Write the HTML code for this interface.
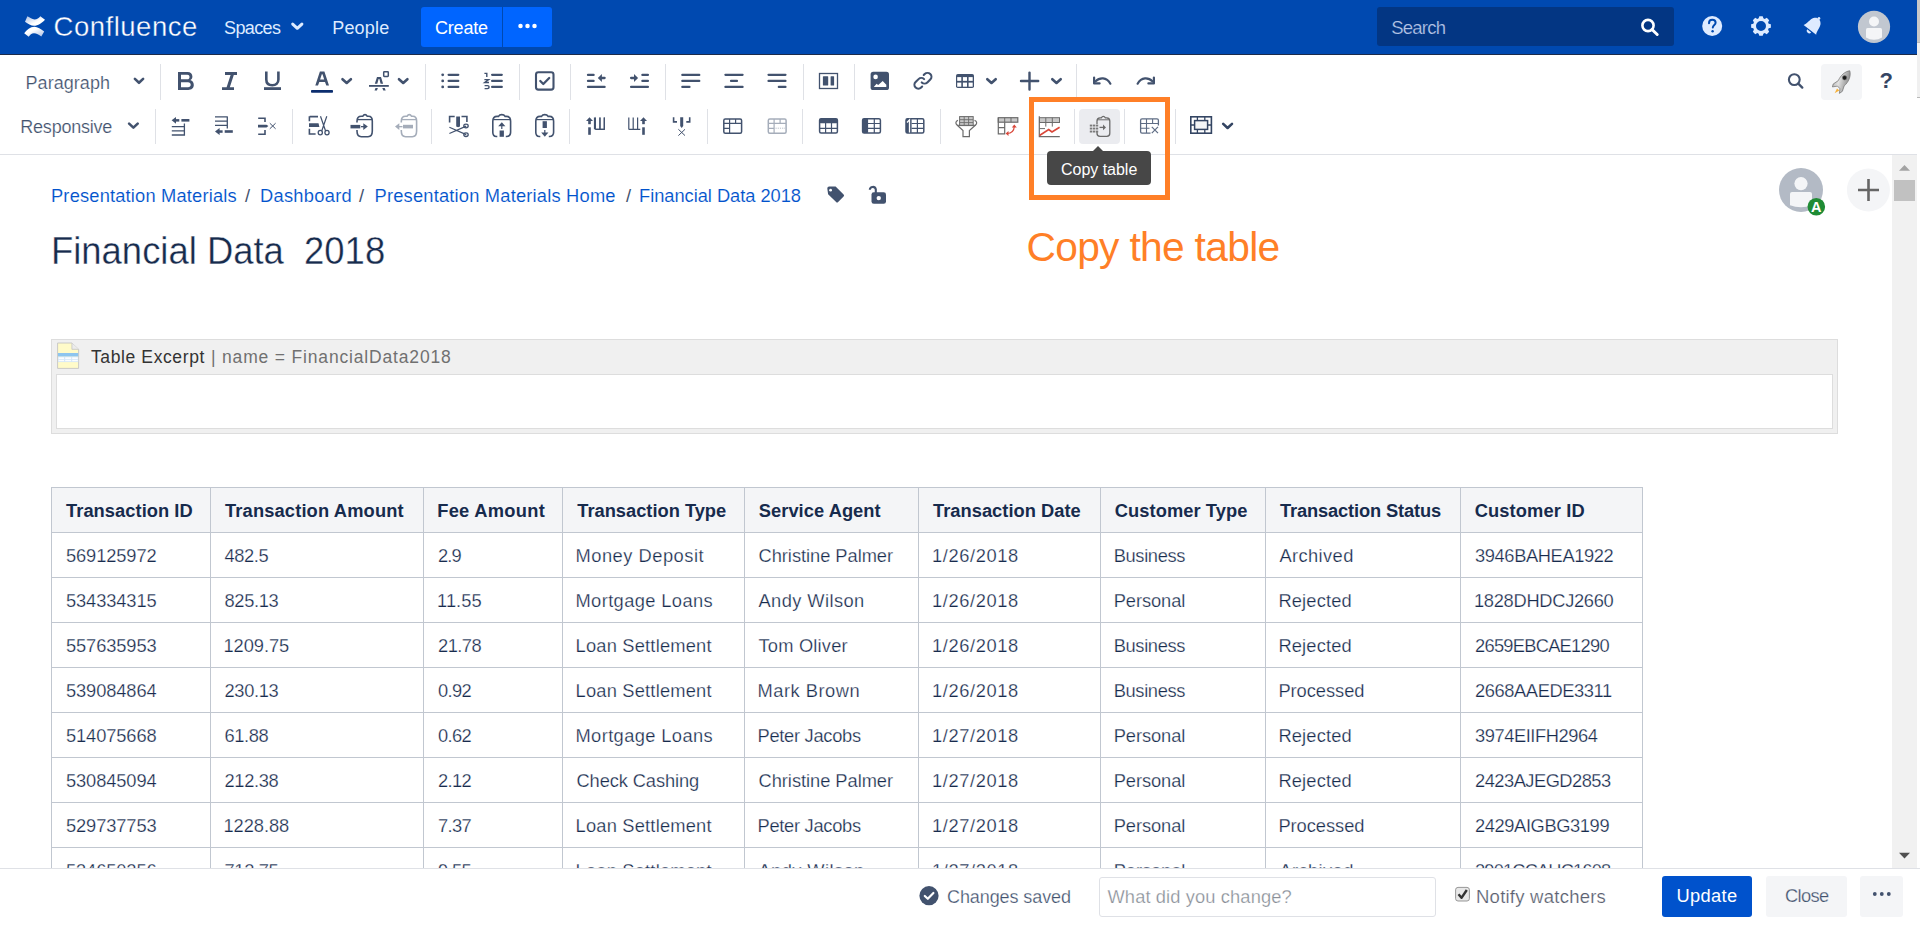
<!DOCTYPE html>
<html><head><meta charset="utf-8"><title>Confluence - Financial Data 2018</title>
<style>
html,body{margin:0;padding:0;width:1920px;height:930px;overflow:hidden;background:#fff;}
body{position:relative;font-family:"Liberation Sans", sans-serif;}
.a{position:absolute;box-sizing:border-box;}
.t{position:absolute;line-height:0;white-space:nowrap;font-family:"Liberation Sans", sans-serif;}
svg.ov{position:absolute;left:0;top:0;}
</style></head><body>
<!-- header -->
<div class="a" style="left:0;top:0;width:1917px;height:54px;background:#0049b0"></div>
<div class="a" style="left:0;top:54px;width:1917px;height:1px;background:#1c2b4a"></div>
<div class="a" style="left:1917px;top:0;width:3px;height:42px;background:#c8c8c8"></div>
<div class="a" style="left:1917px;top:42px;width:3px;height:56px;background:#f0f0f0;border-top:1px solid #b8b8b8;border-bottom:1px solid #b8b8b8"></div>
<div class="a" style="left:421px;top:7px;width:131px;height:40px;background:#0065ff;border-radius:3px"></div>
<div class="a" style="left:502px;top:7px;width:1px;height:40px;background:#0049b0"></div>
<div class="a" style="left:1377px;top:7px;width:297px;height:39px;background:#033683;border-radius:3px"></div>
<!-- toolbar -->
<div class="a" style="left:0;top:154px;width:1917px;height:1px;background:#dfe1e6"></div>
<div class="a" style="left:1821px;top:64px;width:41px;height:36px;background:#f4f5f7;border-radius:4px"></div>
<div class="a" style="left:1079px;top:109px;width:41px;height:35px;background:#ebecf0;border-radius:4px"></div>
<!-- scrollbar -->
<div class="a" style="left:1892px;top:155px;width:25px;height:713px;background:#f1f1f1"></div>
<div class="a" style="left:1894px;top:180px;width:21px;height:21px;background:#c1c1c1"></div>
<!-- macro -->
<div class="a" style="left:51px;top:339px;width:1787px;height:95px;background:#f0f0f0;border:1px solid #dddddd"></div>
<div class="a" style="left:56px;top:374px;width:1777px;height:55px;background:#fff;border:1px solid #dddddd"></div>
<!-- table -->
<div class="a" style="left:51px;top:487px;width:1592px;height:46px;background:#f4f5f7"></div>
<div class="a" style="left:51px;top:487px;width:1px;height:400px;background:#c1c7d0"></div>
<div class="a" style="left:210px;top:487px;width:1px;height:400px;background:#c1c7d0"></div>
<div class="a" style="left:423px;top:487px;width:1px;height:400px;background:#c1c7d0"></div>
<div class="a" style="left:562px;top:487px;width:1px;height:400px;background:#c1c7d0"></div>
<div class="a" style="left:744px;top:487px;width:1px;height:400px;background:#c1c7d0"></div>
<div class="a" style="left:918px;top:487px;width:1px;height:400px;background:#c1c7d0"></div>
<div class="a" style="left:1100px;top:487px;width:1px;height:400px;background:#c1c7d0"></div>
<div class="a" style="left:1265px;top:487px;width:1px;height:400px;background:#c1c7d0"></div>
<div class="a" style="left:1460px;top:487px;width:1px;height:400px;background:#c1c7d0"></div>
<div class="a" style="left:1642px;top:487px;width:1px;height:400px;background:#c1c7d0"></div>
<div class="a" style="left:51px;top:487px;width:1592px;height:1px;background:#c1c7d0"></div>
<div class="a" style="left:51px;top:532px;width:1592px;height:1px;background:#c1c7d0"></div>
<div class="a" style="left:51px;top:577px;width:1592px;height:1px;background:#c1c7d0"></div>
<div class="a" style="left:51px;top:622px;width:1592px;height:1px;background:#c1c7d0"></div>
<div class="a" style="left:51px;top:667px;width:1592px;height:1px;background:#c1c7d0"></div>
<div class="a" style="left:51px;top:712px;width:1592px;height:1px;background:#c1c7d0"></div>
<div class="a" style="left:51px;top:757px;width:1592px;height:1px;background:#c1c7d0"></div>
<div class="a" style="left:51px;top:802px;width:1592px;height:1px;background:#c1c7d0"></div>
<div class="a" style="left:51px;top:847px;width:1592px;height:1px;background:#c1c7d0"></div>
<div class="a" style="left:1047px;top:151px;width:104px;height:34px;background:#474747;border-radius:4px"></div>
<div class="a" style="left:1092px;top:146px;width:0;height:0;border-left:6px solid transparent;border-right:6px solid transparent;border-bottom:6px solid #474747"></div>
<div class="t" style="left:53.50px;top:26.77px;font-size:27.5px;color:#fff;letter-spacing:0.519px;-webkit-text-stroke:0.35px #0049b0;">Confluence</div>
<div class="t" style="left:224.00px;top:27.76px;font-size:18px;color:#deebff;letter-spacing:-0.608px;">Spaces</div>
<div class="t" style="left:332.20px;top:27.76px;font-size:18px;color:#deebff;letter-spacing:0.193px;">People</div>
<div class="t" style="left:435.00px;top:27.76px;font-size:18px;color:#fff;letter-spacing:-0.203px;">Create</div>
<div class="t" style="left:1391.20px;top:27.59px;font-size:18.5px;color:#b3c4e6;letter-spacing:-0.766px;-webkit-text-stroke:0.2px #033683;">Search</div>
<div class="t" style="left:25.50px;top:82.56px;font-size:18px;color:#42526e;letter-spacing:0.057px;-webkit-text-stroke:0.2px #fff;">Paragraph</div>
<div class="t" style="left:20.30px;top:126.76px;font-size:18px;color:#42526e;letter-spacing:-0.227px;-webkit-text-stroke:0.2px #fff;">Responsive</div>
<div class="t" style="left:1879.50px;top:81.37px;font-size:22px;color:#344563;font-weight:700;">?</div>
<div class="t" style="left:51.00px;top:196.16px;font-size:18.3px;color:#0052cc;letter-spacing:0.179px;-webkit-text-stroke:0.12px #fff;">Presentation Materials</div>
<div class="t" style="left:245.00px;top:196.16px;font-size:18.3px;color:#42526e;">/</div>
<div class="t" style="left:260.00px;top:196.16px;font-size:18.3px;color:#0052cc;letter-spacing:0.279px;-webkit-text-stroke:0.12px #fff;">Dashboard</div>
<div class="t" style="left:359.00px;top:196.16px;font-size:18.3px;color:#42526e;">/</div>
<div class="t" style="left:374.50px;top:196.16px;font-size:18.3px;color:#0052cc;letter-spacing:0.202px;-webkit-text-stroke:0.12px #fff;">Presentation Materials Home</div>
<div class="t" style="left:626.00px;top:196.16px;font-size:18.3px;color:#42526e;">/</div>
<div class="t" style="left:639.00px;top:196.16px;font-size:18.3px;color:#0052cc;letter-spacing:-0.035px;-webkit-text-stroke:0.12px #fff;">Financial Data 2018</div>
<div class="t" style="left:51.21px;top:251.41px;font-size:39.2px;color:#172b4d;transform:scaleX(0.9296);transform-origin:0 0;-webkit-text-stroke:0.35px #fff;">Financial Data  2018</div>
<div class="t" style="left:1026.50px;top:246.69px;font-size:40.7px;color:#ff7f27;letter-spacing:-0.673px;">Copy the table</div>
<div class="t" style="left:1061.00px;top:169.65px;font-size:16px;color:#fff;letter-spacing:-0.022px;">Copy table</div>
<div class="t" style="left:91.00px;top:357.13px;font-size:17.5px;color:#333333;letter-spacing:0.611px;">Table Excerpt</div>
<div class="t" style="left:211.00px;top:357.13px;font-size:17.5px;color:#707070;letter-spacing:0.827px;">| name = FinancialData2018</div>
<div class="t" style="left:66.00px;top:511.16px;font-size:18.3px;color:#172b4d;font-weight:700;letter-spacing:0.056px;">Transaction ID</div>
<div class="t" style="left:225.00px;top:511.16px;font-size:18.3px;color:#172b4d;font-weight:700;letter-spacing:0.150px;">Transaction Amount</div>
<div class="t" style="left:437.20px;top:511.16px;font-size:18.3px;color:#172b4d;font-weight:700;letter-spacing:0.296px;">Fee Amount</div>
<div class="t" style="left:577.25px;top:511.16px;font-size:18.3px;color:#172b4d;font-weight:700;letter-spacing:-0.005px;">Transaction Type</div>
<div class="t" style="left:758.75px;top:511.16px;font-size:18.3px;color:#172b4d;font-weight:700;letter-spacing:0.055px;">Service Agent</div>
<div class="t" style="left:933.00px;top:511.16px;font-size:18.3px;color:#172b4d;font-weight:700;letter-spacing:0.030px;">Transaction Date</div>
<div class="t" style="left:1114.80px;top:511.16px;font-size:18.3px;color:#172b4d;font-weight:700;letter-spacing:0.071px;">Customer Type</div>
<div class="t" style="left:1280.00px;top:511.16px;font-size:18.3px;color:#172b4d;font-weight:700;letter-spacing:-0.141px;">Transaction Status</div>
<div class="t" style="left:1474.70px;top:511.16px;font-size:18.3px;color:#172b4d;font-weight:700;letter-spacing:0.121px;">Customer ID</div>
<div class="t" style="left:66.00px;top:555.96px;font-size:18.3px;color:#172b4d;letter-spacing:-0.105px;-webkit-text-stroke:0.25px #fff;">569125972</div>
<div class="t" style="left:224.50px;top:555.96px;font-size:18.3px;color:#172b4d;letter-spacing:-0.395px;-webkit-text-stroke:0.25px #fff;">482.5</div>
<div class="t" style="left:438.00px;top:555.96px;font-size:18.3px;color:#172b4d;letter-spacing:-0.873px;-webkit-text-stroke:0.25px #fff;">2.9</div>
<div class="t" style="left:575.50px;top:555.96px;font-size:18.3px;color:#172b4d;letter-spacing:0.512px;-webkit-text-stroke:0.25px #fff;">Money Deposit</div>
<div class="t" style="left:758.50px;top:555.96px;font-size:18.3px;color:#172b4d;letter-spacing:-0.035px;-webkit-text-stroke:0.25px #fff;">Christine Palmer</div>
<div class="t" style="left:932.00px;top:555.96px;font-size:18.3px;color:#172b4d;letter-spacing:0.605px;-webkit-text-stroke:0.25px #fff;">1/26/2018</div>
<div class="t" style="left:1113.70px;top:555.96px;font-size:18.3px;color:#172b4d;letter-spacing:-0.348px;-webkit-text-stroke:0.25px #fff;">Business</div>
<div class="t" style="left:1279.40px;top:555.96px;font-size:18.3px;color:#172b4d;letter-spacing:0.406px;-webkit-text-stroke:0.25px #fff;">Archived</div>
<div class="t" style="left:1475.00px;top:555.96px;font-size:18.3px;color:#172b4d;letter-spacing:-0.379px;-webkit-text-stroke:0.25px #fff;">3946BAHEA1922</div>
<div class="t" style="left:66.00px;top:600.96px;font-size:18.3px;color:#172b4d;letter-spacing:-0.105px;-webkit-text-stroke:0.25px #fff;">534334315</div>
<div class="t" style="left:224.50px;top:600.96px;font-size:18.3px;color:#172b4d;letter-spacing:-0.350px;-webkit-text-stroke:0.25px #fff;">825.13</div>
<div class="t" style="left:437.00px;top:600.96px;font-size:18.3px;color:#172b4d;letter-spacing:0.069px;-webkit-text-stroke:0.25px #fff;">11.55</div>
<div class="t" style="left:575.50px;top:600.96px;font-size:18.3px;color:#172b4d;letter-spacing:0.386px;-webkit-text-stroke:0.25px #fff;">Mortgage Loans</div>
<div class="t" style="left:758.50px;top:600.96px;font-size:18.3px;color:#172b4d;letter-spacing:0.407px;-webkit-text-stroke:0.25px #fff;">Andy Wilson</div>
<div class="t" style="left:932.00px;top:600.96px;font-size:18.3px;color:#172b4d;letter-spacing:0.605px;-webkit-text-stroke:0.25px #fff;">1/26/2018</div>
<div class="t" style="left:1113.70px;top:600.96px;font-size:18.3px;color:#172b4d;letter-spacing:-0.070px;-webkit-text-stroke:0.25px #fff;">Personal</div>
<div class="t" style="left:1278.40px;top:600.96px;font-size:18.3px;color:#172b4d;letter-spacing:0.174px;-webkit-text-stroke:0.25px #fff;">Rejected</div>
<div class="t" style="left:1474.00px;top:600.96px;font-size:18.3px;color:#172b4d;letter-spacing:-0.293px;-webkit-text-stroke:0.25px #fff;">1828DHDCJ2660</div>
<div class="t" style="left:66.00px;top:645.96px;font-size:18.3px;color:#172b4d;letter-spacing:-0.105px;-webkit-text-stroke:0.25px #fff;">557635953</div>
<div class="t" style="left:223.50px;top:645.96px;font-size:18.3px;color:#172b4d;letter-spacing:-0.069px;-webkit-text-stroke:0.25px #fff;">1209.75</div>
<div class="t" style="left:438.00px;top:645.96px;font-size:18.3px;color:#172b4d;letter-spacing:-0.520px;-webkit-text-stroke:0.25px #fff;">21.78</div>
<div class="t" style="left:575.50px;top:645.96px;font-size:18.3px;color:#172b4d;letter-spacing:0.210px;-webkit-text-stroke:0.25px #fff;">Loan Settlement</div>
<div class="t" style="left:758.50px;top:645.96px;font-size:18.3px;color:#172b4d;letter-spacing:0.193px;-webkit-text-stroke:0.25px #fff;">Tom Oliver</div>
<div class="t" style="left:932.00px;top:645.96px;font-size:18.3px;color:#172b4d;letter-spacing:0.605px;-webkit-text-stroke:0.25px #fff;">1/26/2018</div>
<div class="t" style="left:1113.70px;top:645.96px;font-size:18.3px;color:#172b4d;letter-spacing:-0.348px;-webkit-text-stroke:0.25px #fff;">Business</div>
<div class="t" style="left:1278.40px;top:645.96px;font-size:18.3px;color:#172b4d;letter-spacing:0.174px;-webkit-text-stroke:0.25px #fff;">Rejected</div>
<div class="t" style="left:1475.00px;top:645.96px;font-size:18.3px;color:#172b4d;letter-spacing:-0.729px;-webkit-text-stroke:0.25px #fff;">2659EBCAE1290</div>
<div class="t" style="left:66.00px;top:690.96px;font-size:18.3px;color:#172b4d;letter-spacing:-0.105px;-webkit-text-stroke:0.25px #fff;">539084864</div>
<div class="t" style="left:224.50px;top:690.96px;font-size:18.3px;color:#172b4d;letter-spacing:-0.350px;-webkit-text-stroke:0.25px #fff;">230.13</div>
<div class="t" style="left:438.00px;top:690.96px;font-size:18.3px;color:#172b4d;letter-spacing:-0.638px;-webkit-text-stroke:0.25px #fff;">0.92</div>
<div class="t" style="left:575.50px;top:690.96px;font-size:18.3px;color:#172b4d;letter-spacing:0.210px;-webkit-text-stroke:0.25px #fff;">Loan Settlement</div>
<div class="t" style="left:757.50px;top:690.96px;font-size:18.3px;color:#172b4d;letter-spacing:0.516px;-webkit-text-stroke:0.25px #fff;">Mark Brown</div>
<div class="t" style="left:932.00px;top:690.96px;font-size:18.3px;color:#172b4d;letter-spacing:0.605px;-webkit-text-stroke:0.25px #fff;">1/26/2018</div>
<div class="t" style="left:1113.70px;top:690.96px;font-size:18.3px;color:#172b4d;letter-spacing:-0.348px;-webkit-text-stroke:0.25px #fff;">Business</div>
<div class="t" style="left:1278.40px;top:690.96px;font-size:18.3px;color:#172b4d;letter-spacing:-0.038px;-webkit-text-stroke:0.25px #fff;">Processed</div>
<div class="t" style="left:1475.00px;top:690.96px;font-size:18.3px;color:#172b4d;letter-spacing:-0.399px;-webkit-text-stroke:0.25px #fff;">2668AAEDE3311</div>
<div class="t" style="left:66.00px;top:735.96px;font-size:18.3px;color:#172b4d;letter-spacing:-0.105px;-webkit-text-stroke:0.25px #fff;">514075668</div>
<div class="t" style="left:224.50px;top:735.96px;font-size:18.3px;color:#172b4d;letter-spacing:-0.395px;-webkit-text-stroke:0.25px #fff;">61.88</div>
<div class="t" style="left:438.00px;top:735.96px;font-size:18.3px;color:#172b4d;letter-spacing:-0.638px;-webkit-text-stroke:0.25px #fff;">0.62</div>
<div class="t" style="left:575.50px;top:735.96px;font-size:18.3px;color:#172b4d;letter-spacing:0.386px;-webkit-text-stroke:0.25px #fff;">Mortgage Loans</div>
<div class="t" style="left:757.50px;top:735.96px;font-size:18.3px;color:#172b4d;letter-spacing:-0.278px;-webkit-text-stroke:0.25px #fff;">Peter Jacobs</div>
<div class="t" style="left:932.00px;top:735.96px;font-size:18.3px;color:#172b4d;letter-spacing:0.605px;-webkit-text-stroke:0.25px #fff;">1/27/2018</div>
<div class="t" style="left:1113.70px;top:735.96px;font-size:18.3px;color:#172b4d;letter-spacing:-0.070px;-webkit-text-stroke:0.25px #fff;">Personal</div>
<div class="t" style="left:1278.40px;top:735.96px;font-size:18.3px;color:#172b4d;letter-spacing:0.174px;-webkit-text-stroke:0.25px #fff;">Rejected</div>
<div class="t" style="left:1475.00px;top:735.96px;font-size:18.3px;color:#172b4d;letter-spacing:-0.433px;-webkit-text-stroke:0.25px #fff;">3974EIIFH2964</div>
<div class="t" style="left:66.00px;top:780.96px;font-size:18.3px;color:#172b4d;letter-spacing:-0.105px;-webkit-text-stroke:0.25px #fff;">530845094</div>
<div class="t" style="left:224.50px;top:780.96px;font-size:18.3px;color:#172b4d;letter-spacing:-0.350px;-webkit-text-stroke:0.25px #fff;">212.38</div>
<div class="t" style="left:438.00px;top:780.96px;font-size:18.3px;color:#172b4d;letter-spacing:-0.638px;-webkit-text-stroke:0.25px #fff;">2.12</div>
<div class="t" style="left:576.50px;top:780.96px;font-size:18.3px;color:#172b4d;letter-spacing:-0.109px;-webkit-text-stroke:0.25px #fff;">Check Cashing</div>
<div class="t" style="left:758.50px;top:780.96px;font-size:18.3px;color:#172b4d;letter-spacing:-0.035px;-webkit-text-stroke:0.25px #fff;">Christine Palmer</div>
<div class="t" style="left:932.00px;top:780.96px;font-size:18.3px;color:#172b4d;letter-spacing:0.605px;-webkit-text-stroke:0.25px #fff;">1/27/2018</div>
<div class="t" style="left:1113.70px;top:780.96px;font-size:18.3px;color:#172b4d;letter-spacing:-0.070px;-webkit-text-stroke:0.25px #fff;">Personal</div>
<div class="t" style="left:1278.40px;top:780.96px;font-size:18.3px;color:#172b4d;letter-spacing:0.174px;-webkit-text-stroke:0.25px #fff;">Rejected</div>
<div class="t" style="left:1475.00px;top:780.96px;font-size:18.3px;color:#172b4d;letter-spacing:-0.510px;-webkit-text-stroke:0.25px #fff;">2423AJEGD2853</div>
<div class="t" style="left:66.00px;top:825.96px;font-size:18.3px;color:#172b4d;letter-spacing:-0.105px;-webkit-text-stroke:0.25px #fff;">529737753</div>
<div class="t" style="left:223.50px;top:825.96px;font-size:18.3px;color:#172b4d;letter-spacing:-0.069px;-webkit-text-stroke:0.25px #fff;">1228.88</div>
<div class="t" style="left:438.00px;top:825.96px;font-size:18.3px;color:#172b4d;letter-spacing:-0.638px;-webkit-text-stroke:0.25px #fff;">7.37</div>
<div class="t" style="left:575.50px;top:825.96px;font-size:18.3px;color:#172b4d;letter-spacing:0.210px;-webkit-text-stroke:0.25px #fff;">Loan Settlement</div>
<div class="t" style="left:757.50px;top:825.96px;font-size:18.3px;color:#172b4d;letter-spacing:-0.278px;-webkit-text-stroke:0.25px #fff;">Peter Jacobs</div>
<div class="t" style="left:932.00px;top:825.96px;font-size:18.3px;color:#172b4d;letter-spacing:0.605px;-webkit-text-stroke:0.25px #fff;">1/27/2018</div>
<div class="t" style="left:1113.70px;top:825.96px;font-size:18.3px;color:#172b4d;letter-spacing:-0.070px;-webkit-text-stroke:0.25px #fff;">Personal</div>
<div class="t" style="left:1278.40px;top:825.96px;font-size:18.3px;color:#172b4d;letter-spacing:-0.038px;-webkit-text-stroke:0.25px #fff;">Processed</div>
<div class="t" style="left:1475.00px;top:825.96px;font-size:18.3px;color:#172b4d;letter-spacing:-0.390px;-webkit-text-stroke:0.25px #fff;">2429AIGBG3199</div>
<div class="t" style="left:66.00px;top:870.96px;font-size:18.3px;color:#172b4d;letter-spacing:-0.105px;-webkit-text-stroke:0.25px #fff;">534650256</div>
<div class="t" style="left:224.50px;top:870.96px;font-size:18.3px;color:#172b4d;letter-spacing:-0.350px;-webkit-text-stroke:0.25px #fff;">712.75</div>
<div class="t" style="left:438.00px;top:870.96px;font-size:18.3px;color:#172b4d;letter-spacing:-0.638px;-webkit-text-stroke:0.25px #fff;">9.55</div>
<div class="t" style="left:575.50px;top:870.96px;font-size:18.3px;color:#172b4d;letter-spacing:0.210px;-webkit-text-stroke:0.25px #fff;">Loan Settlement</div>
<div class="t" style="left:758.50px;top:870.96px;font-size:18.3px;color:#172b4d;letter-spacing:0.407px;-webkit-text-stroke:0.25px #fff;">Andy Wilson</div>
<div class="t" style="left:932.00px;top:870.96px;font-size:18.3px;color:#172b4d;letter-spacing:0.605px;-webkit-text-stroke:0.25px #fff;">1/27/2018</div>
<div class="t" style="left:1113.70px;top:870.96px;font-size:18.3px;color:#172b4d;letter-spacing:-0.070px;-webkit-text-stroke:0.25px #fff;">Personal</div>
<div class="t" style="left:1279.40px;top:870.96px;font-size:18.3px;color:#172b4d;letter-spacing:0.406px;-webkit-text-stroke:0.25px #fff;">Archived</div>
<div class="t" style="left:1475.00px;top:870.96px;font-size:18.3px;color:#172b4d;letter-spacing:-0.848px;-webkit-text-stroke:0.25px #fff;">2901CCAHC1608</div>
<!-- footer -->
<div class="a" style="left:0;top:868px;width:1920px;height:62px;background:#fff;border-top:1px solid #dfe1e6"></div>
<div class="a" style="left:1099px;top:877px;width:337px;height:40px;background:#fff;border:1px solid #dfe1e6;border-radius:3px"></div>
<div class="a" style="left:1662px;top:876px;width:90px;height:41px;background:#0052cc;border-radius:3px"></div>
<div class="a" style="left:1766px;top:876px;width:81px;height:41px;background:#f4f5f7;border-radius:3px"></div>
<div class="a" style="left:1860px;top:876px;width:43px;height:41px;background:#f4f5f7;border-radius:3px"></div>
<div class="t" style="left:947.00px;top:896.56px;font-size:18px;color:#42526e;letter-spacing:-0.090px;-webkit-text-stroke:0.25px #fff;">Changes saved</div>
<div class="t" style="left:1107.50px;top:897.16px;font-size:18.3px;color:#8a8f98;letter-spacing:0.118px;-webkit-text-stroke:0.25px #fff;">What did you change?</div>
<div class="t" style="left:1476.00px;top:897.49px;font-size:18.5px;color:#5b6170;letter-spacing:0.242px;-webkit-text-stroke:0.2px #fff;">Notify watchers</div>
<div class="t" style="left:1676.50px;top:896.46px;font-size:18.3px;color:#fff;letter-spacing:0.343px;">Update</div>
<div class="t" style="left:1785.00px;top:896.46px;font-size:18.3px;color:#42526e;letter-spacing:-0.643px;-webkit-text-stroke:0.25px #f4f5f7;">Close</div>
<svg class="ov" width="1920" height="930" viewBox="0 0 1920 930"><defs><linearGradient id="lg1" x1="0" y1="0" x2="1" y2="1"><stop offset="0" stop-color="#a9bde3"/><stop offset="0.6" stop-color="#ffffff"/></linearGradient>
<linearGradient id="lg2" x1="1" y1="1" x2="0" y2="0"><stop offset="0" stop-color="#a9bde3"/><stop offset="0.6" stop-color="#ffffff"/></linearGradient></defs>
<path fill="url(#lg1)" d="M27.4,16.3 L25,21.7 C28,23.5 31,25.7 34,25.7 C38,25.7 42,23 45,19.7 L40.3,16.2 C39,17.8 37,19.5 34.5,19.5 C32,19.5 30,17.5 27.4,16.3 Z"/>
<path fill="url(#lg2)" d="M24.2,33.3 L28.7,36.8 C30,35 31.5,33.3 34,33.3 C36.5,33.3 39,35 41.3,36.5 L44.2,31.4 C41,29.5 37.5,26.8 34.5,26.8 C30,26.8 27,30 24.2,33.3 Z"/>
<path d="M292.7,24.1 L297.3,28.3 L301.9,24.1" fill="none" stroke="#deebff" stroke-width="3" stroke-linecap="round" stroke-linejoin="round"/>
<circle cx="520.5" cy="26" r="2.25" fill="#fff"/>
<circle cx="527.5" cy="26" r="2.25" fill="#fff"/>
<circle cx="534.5" cy="26" r="2.25" fill="#fff"/>
<circle cx="1648" cy="25.5" r="5.6" fill="none" stroke="#fff" stroke-width="2.6"/><path d="M1652,29.5 L1657.2,34.5" stroke="#fff" stroke-width="3" stroke-linecap="round"/>
<circle cx="1712.2" cy="26" r="10" fill="#deebff"/>
<path d="M1709,23.2 C1709,21 1710.5,19.8 1712.3,19.8 C1714.2,19.8 1715.6,21 1715.6,22.8 C1715.6,24.9 1712.8,25.2 1712.8,27.6" fill="none" stroke="#0049b0" stroke-width="2" stroke-linecap="round"/><circle cx="1712.6" cy="31.2" r="1.2" fill="#0049b0"/>
<path fill="#deebff" fill-rule="evenodd" d="M1770.86,24.31 L1770.86,27.69 L1768.64,28.36 L1768.08,29.73 L1769.17,31.77 L1766.77,34.17 L1764.73,33.08 L1763.36,33.64 L1762.69,35.86 L1759.31,35.86 L1758.64,33.64 L1757.27,33.08 L1755.23,34.17 L1752.83,31.77 L1753.92,29.73 L1753.36,28.36 L1751.14,27.69 L1751.14,24.31 L1753.36,23.64 L1753.92,22.27 L1752.83,20.23 L1755.23,17.83 L1757.27,18.92 L1758.64,18.36 L1759.31,16.14 L1762.69,16.14 L1763.36,18.36 L1764.73,18.92 L1766.77,17.83 L1769.17,20.23 L1768.08,22.27 L1768.64,23.64 Z M1766,26 A5,5 0 1 0 1756,26 A5,5 0 1 0 1766,26 Z"/>
<g transform="rotate(38 1813 26)"><path fill="#deebff" d="M1805,31 C1807,29 1806.5,22 1808.5,19.5 C1810,17.5 1811.5,17 1813,17 C1814.5,17 1816,17.5 1817.5,19.5 C1819.5,22 1819,29 1821,31 Z"/><path fill="#deebff" d="M1810.5,32.2 H1815.5 A2.5,2.5 0 0 1 1810.5,32.2 Z"/><circle cx="1813" cy="16.3" r="1.4" fill="#deebff"/></g>
<circle cx="1874" cy="26.8" r="16.1" fill="#c1c7d0"/><circle cx="1874" cy="21.5" r="5" fill="#f4f5f7"/><path fill="#f4f5f7" d="M1866,29.5 Q1866,28 1867.5,28 H1880.5 Q1882,28 1882,29.5 V37.5 Q1878.5,39.8 1874,39.8 Q1869.5,39.8 1866,37.5 Z"/>
<path d="M134.9,78.9 L139,82.8 L143.1,78.9" fill="none" stroke="#42526e" stroke-width="2.6" stroke-linecap="round" stroke-linejoin="round"/>
<rect x="160.0" y="64" width="1" height="36" fill="#dfe1e6"/>
<rect x="425.0" y="64" width="1" height="36" fill="#dfe1e6"/>
<rect x="519.0" y="64" width="1" height="36" fill="#dfe1e6"/>
<rect x="570.0" y="64" width="1" height="36" fill="#dfe1e6"/>
<rect x="665.0" y="64" width="1" height="36" fill="#dfe1e6"/>
<rect x="803.0" y="64" width="1" height="36" fill="#dfe1e6"/>
<rect x="854.0" y="64" width="1" height="36" fill="#dfe1e6"/>
<rect x="1076.0" y="64" width="1" height="36" fill="#dfe1e6"/>
<path fill="#42526e" fill-rule="evenodd" d="M178,72 H187.6 C190.6,72 192.4,73.9 192.4,76.4 C192.4,78.1 191.6,79.4 190.3,80.1 C192.5,80.8 193.8,82.5 193.8,85.1 C193.8,88.2 191.6,90 188.3,90 H178 Z M181,74.8 V79.3 H187.3 C188.7,79.3 189.5,78.5 189.5,77 C189.5,75.6 188.7,74.8 187.3,74.8 Z M181,82.2 V87.2 H188 C189.7,87.2 190.7,86.3 190.7,84.7 C190.7,83.1 189.7,82.2 188,82.2 Z"/>
<path fill="#42526e" d="M225,72 H237 V75 H233.8 L229.8,87.2 H234 V90 H222 V87.2 H226.6 L230.6,75 H225 Z"/>
<path d="M266.3,71.6 V79.6 C266.3,83.3 268.8,85.3 272.3,85.3 C275.8,85.3 278.4,83.3 278.4,79.6 V71.6" fill="none" stroke="#42526e" stroke-width="2.6"/>
<rect x="264" y="87.2" width="17" height="2.8" fill="#42526e"/>
<path fill="#42526e" fill-rule="evenodd" d="M315.3,85.6 L319.9,71.6 H324.4 L329,85.6 H326.3 L325,81.9 H319.3 L318,85.6 Z M320.1,79.5 H324.2 L322.5,74.2 H321.8 Z"/>
<rect x="311" y="90" width="22" height="2.8" rx="0.8" fill="#0b2d6e"/>
<path d="M342.5,79.2 L346.7,83 L350.9,79.2" fill="none" stroke="#42526e" stroke-width="2.6" stroke-linecap="round" stroke-linejoin="round"/>
<path fill="#42526e" d="M374.8,83.8 L377,76.9 H381 L383.1,83.8 H380.6 L379.4,79 H378.6 L377.3,83.8 Z"/>
<rect x="369" y="85" width="19.8" height="1.8" fill="#42526e"/>
<path fill="#42526e" d="M375.5,88 H377.9 L376.9,90.6 H374.5 Z M382.3,88 H384.7 L385.7,90.6 H383.3 Z"/>
<rect x="383.7" y="71.8" width="4.6" height="4.6" fill="none" stroke="#42526e" stroke-width="1.5" rx="0.6"/>
<path d="M399,79.2 L403.2,83 L407.4,79.2" fill="none" stroke="#42526e" stroke-width="2.6" stroke-linecap="round" stroke-linejoin="round"/>
<circle cx="442.7" cy="74.8" r="1.4" fill="#42526e"/><path d="M448.6,74.8 H458.3" stroke="#42526e" stroke-width="2.2" stroke-linecap="round"/>
<circle cx="442.7" cy="80.9" r="1.4" fill="#42526e"/><path d="M448.6,80.9 H458.3" stroke="#42526e" stroke-width="2.2" stroke-linecap="round"/>
<circle cx="442.7" cy="86.9" r="1.4" fill="#42526e"/><path d="M448.6,86.9 H458.3" stroke="#42526e" stroke-width="2.2" stroke-linecap="round"/>
<path d="M492.1,74.8 H501.8" stroke="#42526e" stroke-width="2.2" stroke-linecap="round"/>
<path d="M492.1,80.9 H501.8" stroke="#42526e" stroke-width="2.2" stroke-linecap="round"/>
<path d="M492.1,86.9 H501.8" stroke="#42526e" stroke-width="2.2" stroke-linecap="round"/>
<path d="M484.4,73.4 H486.8 V77 M484.4,79.6 H488.6 L484.7,82.5 H489 M484.6,85.6 H487.5 Q489.1,85.7 489.1,87.1 Q489.1,88.6 487.5,88.6 H484.6" fill="none" stroke="#42526e" stroke-width="1.4"/>
<rect x="536" y="72.2" width="17.5" height="17.4" rx="2.4" fill="none" stroke="#42526e" stroke-width="2.1"/><path d="M540.3,81 L543.3,84 L549.2,78" fill="none" stroke="#42526e" stroke-width="2.3" stroke-linecap="round" stroke-linejoin="round"/>
<path d="M588,74.9 H593.6 M588,80.9 H593.6 M588,86.9 H604.6" stroke="#42526e" stroke-width="2.3" stroke-linecap="round"/>
<path d="M601,78 H604.6" stroke="#42526e" stroke-width="2.3" stroke-linecap="round"/><path fill="#42526e" d="M597.8,78 L601.9,74.1 V81.9 Z"/>
<path d="M642.4,74.9 H647.9 M642.4,80.9 H647.9 M631.1,86.9 H647.9" stroke="#42526e" stroke-width="2.3" stroke-linecap="round"/>
<path d="M631.1,78 H634.6" stroke="#42526e" stroke-width="2.3" stroke-linecap="round"/><path fill="#42526e" d="M638.1,78 L634,74.1 V81.9 Z"/>
<path d="M682.3,74.9 H699.3 M682.3,80.9 H699.3 M682.3,86.9 H689.5" stroke="#42526e" stroke-width="2.2" stroke-linecap="round"/>
<path d="M725.4,74.8 H742.6 M731,80.9 H737 M725.4,86.9 H742.6" stroke="#42526e" stroke-width="2.2" stroke-linecap="round"/>
<path d="M768.5,74.8 H785.5 M768.5,80.9 H785.5 M778.8,86.9 H785.5" stroke="#42526e" stroke-width="2.2" stroke-linecap="round"/>
<rect x="819.5" y="73.5" width="18" height="15" fill="none" stroke="#42526e" stroke-width="1.3"/><rect x="822.9" y="76.2" width="5.3" height="9.3" rx="0.6" fill="#42526e"/><rect x="830.6" y="76.2" width="3.5" height="9.3" rx="0.6" fill="#42526e"/>
<rect x="870.6" y="71.8" width="18.4" height="18.2" rx="2.6" fill="#42526e"/><circle cx="875.6" cy="76.9" r="2.3" fill="#fff"/><path fill="#fff" d="M873.8,87 L876.6,83.8 L878.2,85.1 L882.7,81 L886.3,84.8 V87 Z"/>
<path transform="translate(910.83,67.79) scale(1.02)" fill="#42526e" d="M12.856 5.457l-.937.92a1.002 1.002 0 000 1.437 1.047 1.047 0 001.463 0l.938-.92a2.871 2.871 0 013.99 0 2.742 2.742 0 010 3.922l-2.882 2.83a2.871 2.871 0 01-3.99 0 1.047 1.047 0 00-1.463 0 1.002 1.002 0 000 1.437 4.986 4.986 0 006.919 0l2.89-2.833a4.768 4.768 0 000-6.813 4.98 4.98 0 00-6.928 0zm-2.503 12.192l-.938.92a2.871 2.871 0 01-3.99 0 2.742 2.742 0 010-3.922l2.882-2.83a2.87 2.87 0 013.99 0 1.047 1.047 0 001.463 0 1.002 1.002 0 000-1.437 4.986 4.986 0 00-6.919 0l-2.89 2.834a4.768 4.768 0 000 6.813 4.98 4.98 0 006.928 0l.938-.92a1.002 1.002 0 000-1.437 1.047 1.047 0 00-1.463 0h-.001z"/>
<rect x="956" y="73.9" width="18" height="14.1" rx="1.8" fill="#42526e"/>
<rect x="957.2" y="77.1" width="4.1" height="3.75" fill="#fff"/>
<rect x="957.2" y="82.6" width="4.1" height="4.1" fill="#fff"/>
<rect x="962.9" y="77.1" width="4.1" height="3.75" fill="#fff"/>
<rect x="962.9" y="82.6" width="4.1" height="4.1" fill="#fff"/>
<rect x="968.6" y="77.1" width="4.1" height="3.75" fill="#fff"/>
<rect x="968.6" y="82.6" width="4.1" height="4.1" fill="#fff"/>
<path d="M987.3,79.2 L991.5,83 L995.7,79.2" fill="none" stroke="#42526e" stroke-width="2.6" stroke-linecap="round" stroke-linejoin="round"/>
<path d="M1029.5,72.6 V89.6 M1021,81 H1038.2" stroke="#42526e" stroke-width="2.4" stroke-linecap="round"/>
<path d="M1052.3,79.2 L1056.5,83 L1060.7,79.2" fill="none" stroke="#42526e" stroke-width="2.6" stroke-linecap="round" stroke-linejoin="round"/>
<path d="M1094.1,77.6 V83.4 H1099.6" fill="none" stroke="#42526e" stroke-width="2.2" stroke-linecap="round" stroke-linejoin="round"/><path d="M1095.6,81.3 C1099.5,77.3 1106.5,76.8 1110.4,83.7" fill="none" stroke="#42526e" stroke-width="2.2" stroke-linecap="round"/>
<path d="M1153.9,77.6 V83.4 H1148.4" fill="none" stroke="#42526e" stroke-width="2.2" stroke-linecap="round" stroke-linejoin="round"/><path d="M1152.4,81.3 C1148.5,77.3 1141.5,76.8 1137.6,83.7" fill="none" stroke="#42526e" stroke-width="2.2" stroke-linecap="round"/>
<circle cx="1794.3" cy="79.6" r="5.4" fill="none" stroke="#42526e" stroke-width="2.1"/><path d="M1798.3,83.6 L1802.3,87.6" stroke="#42526e" stroke-width="2.3" stroke-linecap="round"/>
<defs><linearGradient id="rk" x1="0" y1="0" x2="1" y2="0.3"><stop offset="0" stop-color="#9a9a9a"/><stop offset="0.45" stop-color="#e2e2e2"/><stop offset="1" stop-color="#8c8c8c"/></linearGradient></defs><path fill="url(#rk)" stroke="#6e6e6e" stroke-width="0.7" d="M1849.8,70.8 C1845,71.3 1840.5,75.5 1838.3,80.6 L1833.2,84 L1832.4,86.9 L1837.6,86.1 L1839.9,88.7 L1839.4,93.4 L1842.4,91.3 L1844.1,86 C1848.8,82 1851.2,76 1849.8,70.8 Z"/><circle cx="1844.6" cy="77.8" r="2.2" fill="#1a1a1a" stroke="#777" stroke-width="0.6"/><path fill="#f7b23b" d="M1837,88.4 L1834.6,93.2 L1839.4,90.6 Z"/>
<path d="M129.1,123.6 L133.4,127.6 L137.7,123.6" fill="none" stroke="#42526e" stroke-width="2.6" stroke-linecap="round" stroke-linejoin="round"/>
<rect x="155.0" y="109" width="1" height="35" fill="#dfe1e6"/>
<rect x="292.0" y="109" width="1" height="35" fill="#dfe1e6"/>
<rect x="431.0" y="109" width="1" height="35" fill="#dfe1e6"/>
<rect x="569.0" y="109" width="1" height="35" fill="#dfe1e6"/>
<rect x="707.0" y="109" width="1" height="35" fill="#dfe1e6"/>
<rect x="802.0" y="109" width="1" height="35" fill="#dfe1e6"/>
<rect x="940.0" y="109" width="1" height="35" fill="#dfe1e6"/>
<rect x="1074.0" y="109" width="1" height="35" fill="#dfe1e6"/>
<rect x="1124.0" y="109" width="1" height="35" fill="#dfe1e6"/>
<rect x="1175.0" y="109" width="1" height="35" fill="#dfe1e6"/>
<path fill="#42526e" d="M171.6,120.3 L176,116.9 V123.7 Z"/><rect x="175.5" y="119.1" width="3.8" height="2.5" fill="#42526e"/><rect x="181.4" y="119" width="8" height="2.6" fill="#42526e"/>
<path d="M171.8,126.6 H183.8 M171.8,130.9 H183.8 M171.8,135 H184.4 V123.4" fill="none" stroke="#42526e" stroke-width="1.3"/>
<path d="M215,116.9 H227.6 M215,121.2 H227.6 M215,125.3 H227.6 M227.3,116.4 V128.4" fill="none" stroke="#42526e" stroke-width="1.3"/>
<path fill="#42526e" d="M215,131.5 L219.6,128 V135 Z"/><rect x="219" y="130.3" width="3.6" height="2.5" fill="#42526e"/><rect x="224.7" y="130.2" width="8.1" height="2.6" fill="#42526e"/>
<path d="M258.2,118.2 H265 V121.9 M258.2,134.2 H265 V130" fill="none" stroke="#42526e" stroke-width="1.6"/><path fill="#42526e" d="M258,124.7 H266.5 L268.4,126.1 L266.5,127.5 H258 Z"/><path d="M269.8,123.2 L275.6,128.8 M275.6,123.2 L269.8,128.8" fill="none" stroke="#42526e" stroke-width="1"/>
<path d="M309.7,116.6 H318 M309.4,116.2 V121.3 M309.4,128.8 V134 H315.6" fill="none" stroke="#42526e" stroke-width="1.6"/><path fill="#42526e" d="M309,123.2 H318.5 L319.4,126.9 H309 Z"/>
<path d="M320.5,116.2 L325.6,131 M326.8,116.2 L321.7,131" fill="none" stroke="#42526e" stroke-width="1.2"/><ellipse cx="320.3" cy="132.6" rx="2.1" ry="2.3" fill="none" stroke="#42526e" stroke-width="1.3"/><ellipse cx="327" cy="132.6" rx="2.1" ry="2.3" fill="none" stroke="#42526e" stroke-width="1.3"/>
<path d="M357,122.5 V121.4 Q357,116.3 361.2,116.3 H362.7 Q363.7,114.6 365,114.6 Q366.3,114.6 367.3,116.3 H368.5 Q372.3,116.3 372.3,121 V131 Q372.3,136.7 368,136.7 H361.3 Q357,136.7 357,131 V130" fill="none" stroke="#42526e" stroke-width="1.6"/><path d="M357.3,119.6 H372" stroke="#42526e" stroke-width="1.3"/>
<rect x="350.5" y="124.9" width="9.8" height="3.5" fill="#42526e"/><path fill="#42526e" d="M367.8,126.6 L363.3,123.2 V130 Z"/><rect x="361" y="126" width="3" height="1.3" fill="#42526e"/>
<path d="M401.3,122.5 V121.4 Q401.3,116.3 405.5,116.3 H407 Q408,114.6 409.3,114.6 Q410.6,114.6 411.6,116.3 H412.8 Q416.6,116.3 416.6,121 V131 Q416.6,136.7 412.3,136.7 H405.6 Q401.3,136.7 401.3,131 V130" fill="none" stroke="#a5adba" stroke-width="1.6"/><path d="M401.6,119.6 H416.3" stroke="#a5adba" stroke-width="1.3"/>
<rect x="403" y="124.8" width="10" height="3.6" fill="#a5adba"/><path fill="#a5adba" d="M395,126.6 L399.3,123.3 V130 Z"/><rect x="399" y="126" width="3.5" height="1.3" fill="#a5adba"/>
<path d="M449.6,122.6 V116.5 H454.7 M461.5,116.5 H466.9 V122" fill="none" stroke="#42526e" stroke-width="1.6"/><path fill="#42526e" d="M456.2,116.6 H460 V126.6 L458.1,127.3 L456.2,126.6 Z"/>
<path d="M449.4,127.2 L466.2,134.6 M449.4,133.5 L466.2,126.1" fill="none" stroke="#42526e" stroke-width="1.2"/><ellipse cx="466" cy="126" rx="2.2" ry="1.8" fill="none" stroke="#42526e" stroke-width="1.3"/><ellipse cx="466" cy="134.7" rx="2.2" ry="1.8" fill="none" stroke="#42526e" stroke-width="1.3"/>
<path d="M497.3,136.5 H496.40000000000003 Q492.8,136.5 492.8,132.3 V121.3 Q492.8,116.4 497.1,116.4 H498.5 Q499.5,114.6 501.8,114.6 Q504.1,114.6 505.1,116.4 H506.40000000000003 Q510.6,116.4 510.6,121.3 V132.3 Q510.6,136.5 506.40000000000003,136.5 H505.8" fill="none" stroke="#42526e" stroke-width="1.6"/><path d="M493.2,119.6 H510.2" stroke="#42526e" stroke-width="1.2"/>
<rect x="499.6" y="130.5" width="4.3" height="6.3" fill="#42526e"/><path fill="#42526e" d="M501.8,122.3 L498.2,126.3 H505.40000000000003 Z"/><rect x="501.2" y="126" width="1.2" height="3" fill="#42526e"/>
<path d="M540.3,136.5 H539.4 Q535.8,136.5 535.8,132.3 V121.3 Q535.8,116.4 540.0999999999999,116.4 H541.5 Q542.5,114.6 544.8,114.6 Q547.0999999999999,114.6 548.0999999999999,116.4 H549.4 Q553.5999999999999,116.4 553.5999999999999,121.3 V132.3 Q553.5999999999999,136.5 549.4,136.5 H548.8" fill="none" stroke="#42526e" stroke-width="1.6"/><path d="M536.1999999999999,119.6 H553.1999999999999" stroke="#42526e" stroke-width="1.2"/>
<rect x="542.5999999999999" y="121.2" width="4.3" height="6.8" fill="#42526e"/><path fill="#42526e" d="M544.8,136.8 L541.1999999999999,132.5 H548.4 Z"/><rect x="544.1999999999999" y="130" width="1.2" height="3" fill="#42526e"/>
<path fill="#42526e" d="M589.5,117.2 L593,121 H586 Z"/><rect x="588.2" y="120.6" width="2.6" height="3.6" fill="#42526e"/><rect x="588.2" y="127.3" width="2.6" height="7.5" fill="#42526e"/>
<path d="M595.6,129.4 H604.3 V117.4 M595.4,117.4 H595.6 M594.5,117.4 V129.3 M600,117.4 V129.3" fill="none" stroke="#42526e" stroke-width="1.2"/>
<path d="M595.4,117.4 V129.4 M599.9,117.4 V129.4 M604.3,117.4 V129.4 M595.4,129.4 H604.3" fill="none" stroke="#42526e" stroke-width="1.2"/>
<path d="M628.8,117.4 V129.4 M633.2,117.4 V129.4 M637.6,117.4 V129.4 M628.8,129.4 H640.3" fill="none" stroke="#42526e" stroke-width="1.2"/>
<path fill="#42526e" d="M643.5,117.2 L647,121 H640 Z"/><rect x="642.2" y="120.6" width="2.6" height="3.6" fill="#42526e"/><rect x="642.2" y="127.3" width="2.6" height="7.5" fill="#42526e"/>
<path d="M673.6,117.2 V121.9 H677 M689.7,117.2 V121.9 H686.3" fill="none" stroke="#42526e" stroke-width="1.6"/><path fill="#42526e" d="M680.2,117.2 H683.2 V126.1 L681.7,127.9 L680.2,126.1 Z"/><path d="M678.4,129.3 L685,135.6 M685,129.3 L678.4,135.6" fill="none" stroke="#42526e" stroke-width="1"/>
<rect x="723.8" y="118.9" width="17.8" height="14.4" rx="1.5" fill="none" stroke="#42526e" stroke-width="1.5"/><path d="M724,123.4 H741.5 M724,128.3 H729.6 M729.6,119 V133.2 M735.6,119 V123.4" fill="none" stroke="#42526e" stroke-width="1.2"/>
<rect x="768.3" y="118.9" width="17.8" height="14.4" rx="1.5" fill="none" stroke="#a5adba" stroke-width="1.5"/><path d="M768.5,123.4 H786 M768.5,128.3 H774.1 M774.1,119 V133.2 M780.1,119 V123.4" fill="none" stroke="#a5adba" stroke-width="1.2"/><path d="M775.5,128.2 H785" stroke="#a5adba" stroke-width="0.8" stroke-dasharray="1.2,1"/>
<rect x="819.6" y="118.7" width="17.8" height="14.4" rx="1.5" fill="none" stroke="#42526e" stroke-width="1.5"/><rect x="819.6" y="118.7" width="17.8" height="4.6" rx="1" fill="#42526e"/><path d="M820,128.3 H837 M825.6,123 V133 M831.5,123 V133" fill="none" stroke="#42526e" stroke-width="1.2"/>
<rect x="862.6" y="118.7" width="17.8" height="14.4" rx="1.5" fill="none" stroke="#42526e" stroke-width="1.5"/><rect x="862.6" y="118.7" width="5.5" height="14.4" rx="1" fill="#42526e"/><path d="M868,123.5 H880 M868,128.3 H880 M874.3,119 V133" fill="none" stroke="#42526e" stroke-width="1.2"/>
<rect x="906" y="118.7" width="17.8" height="14.4" rx="1.5" fill="none" stroke="#42526e" stroke-width="1.5"/><rect x="906" y="118.7" width="5.6" height="14.4" rx="1" fill="#42526e"/><path d="M911.6,123.5 H923.5 M911.6,128.3 H923.5 M917.4,119 V133" fill="none" stroke="#42526e" stroke-width="1.2"/><path d="M907,122.5 L909.5,119.8 V132.5" fill="none" stroke="#fff" stroke-width="1.3"/>
<rect x="959.6" y="116.6" width="13.6" height="9" fill="#c8c8c8" stroke="#6b6b6b" stroke-width="1"/><path d="M960,119.7 H973 M960,122.6 H973 M964.2,116.6 V125.6 M968.6,116.6 V125.6" stroke="#6b6b6b" stroke-width="0.9"/>
<path d="M958,120.3 C955.5,121 955.3,123.6 957,125 L963,130.5 V136.6 H969.4 V130.5 L975.6,125 C977.3,123.6 977,121 974.5,120.3" fill="none" stroke="#6b6b6b" stroke-width="1.2"/><path d="M957,125.3 H975.6" stroke="#6b6b6b" stroke-width="1"/>
<rect x="998.3" y="117.7" width="19.5" height="4.5" fill="#c8c8c8" stroke="#6b6b6b" stroke-width="1.2"/><path d="M1004.7,117.7 V122.2 M1011,117.7 V122.2" stroke="#6b6b6b" stroke-width="1"/><path d="M998.3,117.7 V133.8 H1004.7 V122.2 M998.3,127.6 H1004.7" fill="none" stroke="#6b6b6b" stroke-width="1.2"/>
<path d="M1007,133.5 C1011,133.5 1014,131 1014.3,126.5" fill="none" stroke="#d9473a" stroke-width="1.2"/><path fill="#d9473a" d="M1005.6,133.4 L1008.5,131 L1008.5,136 Z M1014.3,124.6 L1011.8,127.5 L1016.8,127.5 Z"/>
<path d="M1039.3,116.2 V136.6 H1059.8" fill="none" stroke="#6b6b6b" stroke-width="1.2"/><rect x="1039.5" y="117.7" width="20" height="4.8" fill="#c8c8c8" stroke="#6b6b6b" stroke-width="1"/><path d="M1045.8,117.7 V126.6 M1052.3,117.7 V126.6 M1039.5,128.6 H1045" stroke="#6b6b6b" stroke-width="1"/><path d="M1039.5,135.5 L1048.7,129.5 L1052,132 L1059.6,127.3" fill="none" stroke="#d9473a" stroke-width="1.6"/>
<path d="M1097,124 V121 Q1097,117.8 1100,117.8 H1101.3 Q1102.2,116.3 1103.3,116.3 Q1104.5,116.3 1105.4,117.8 H1106.8 Q1109.8,117.8 1109.8,121 V133.3 Q1109.8,136.4 1106.8,136.4 H1100 Q1097,136.4 1097,133.3 V132" fill="none" stroke="#6b6b6b" stroke-width="1.3"/><path d="M1097.2,119.8 H1109.6" stroke="#6b6b6b" stroke-width="1"/>
<g fill="#7a7a7a"><rect x="1089.8" y="124.6" width="2.4" height="1.9"/><rect x="1092.8" y="124.6" width="2.4" height="1.9"/><rect x="1095.8" y="124.6" width="2.4" height="1.9"/><rect x="1089.8" y="127.6" width="2.4" height="1.9"/><rect x="1092.8" y="127.6" width="2.4" height="1.9"/><rect x="1095.8" y="127.6" width="2.4" height="1.9"/><rect x="1089.8" y="130.6" width="2.4" height="1.9"/><rect x="1092.8" y="130.6" width="2.4" height="1.9"/><rect x="1095.8" y="130.6" width="2.4" height="1.9"/></g><path d="M1099.5,127.4 H1103.5" stroke="#6b6b6b" stroke-width="1.3"/><path fill="#6b6b6b" d="M1106,127.4 L1103,124.6 V130.2 Z"/>
<path d="M1150.5,133.2 H1142 Q1140.6,133.2 1140.6,131.8 V120.3 Q1140.6,118.9 1142,118.9 H1157 Q1158.4,118.9 1158.4,120.3 V125.5" fill="none" stroke="#5e6c84" stroke-width="1.3"/><path d="M1140.8,123.5 H1158.3 M1140.8,128.3 H1149.5 M1146.5,119 V133 M1152.6,119 V124" stroke="#5e6c84" stroke-width="1.1"/><path d="M1151.8,126.8 L1158,133.2 M1158,126.8 L1151.8,133.2" stroke="#5e6c84" stroke-width="1.2"/>
<rect x="1190.8" y="116.8" width="20.6" height="16.4" fill="none" stroke="#344563" stroke-width="1.6"/><rect x="1194.6" y="120.6" width="13" height="8.8" fill="#f4f5f7" stroke="#344563" stroke-width="1.5"/><path d="M1197.4,117 V120.6 M1204.8,117 V120.6 M1197.4,129.4 V133 M1204.8,129.4 V133 M1191,125 H1194.6 M1207.6,125 H1211.2" stroke="#344563" stroke-width="1.3"/>
<path d="M1223.2,123.9 L1227.6,128 L1232,123.9" fill="none" stroke="#344563" stroke-width="2.6" stroke-linecap="round" stroke-linejoin="round"/>
<path fill="#42526e" d="M827.3,188.4 Q827.3,186.6 829.1,186.6 H835.6 L843.6,194.6 Q844.6,195.6 843.6,196.6 L838.1,202.1 Q837.1,203.1 836.1,202.1 L828.1,194.3 Z"/><circle cx="830.6" cy="190.2" r="1.4" fill="#fff"/>
<path d="M869.8,189.8 A3.05,3.05 0 0 1 875.8,189.2 V193" fill="none" stroke="#42526e" stroke-width="2.1"/><rect x="871.5" y="192.2" width="14.5" height="11.5" rx="2.3" fill="#42526e"/><circle cx="878.75" cy="198.1" r="2.2" fill="#fff"/>
<circle cx="1801" cy="190" r="22" fill="#b3bac5"/><circle cx="1801" cy="183.6" r="6.6" fill="#f4f5f7"/><path fill="#f4f5f7" d="M1790,194 Q1790,192 1792,192 H1810 Q1812,192 1812,194 V205.3 Q1806.8,207.3 1801,207.3 Q1795.2,207.3 1790,205.3 Z"/>
<circle cx="1816.3" cy="206.8" r="8.8" fill="#1f8b34"/><text x="1816.3" y="212.2" text-anchor="middle" font-family="Liberation Sans" font-size="14.5" font-weight="700" fill="#fff">A</text>
<circle cx="1868.4" cy="190" r="21.5" fill="#f4f5f7"/><path d="M1868.5,179 V201 M1858,190 H1879" stroke="#666" stroke-width="2.6"/>
<path fill="#a3a3a3" d="M1904.5,165 L1910,170.8 H1899 Z"/><path fill="#505050" d="M1904.5,858.6 L1910,852.8 H1899 Z"/>
<path fill="#fffbc9" stroke="#c4c4c4" stroke-width="0.9" d="M57.6,343 H71.9 L78.6,349.3 V368.4 H57.6 Z"/><path fill="#ececec" stroke="#c4c4c4" stroke-width="0.8" d="M71.9,343 V349.3 H78.6"/>
<rect x="58" y="353" width="20.2" height="3.6" fill="#8dc5ef"/><rect x="58" y="356.6" width="20.2" height="5.5" fill="#d5e7f8"/>
<g fill="#fbfdff"><rect x="58.6" y="357.3" width="5.4" height="1.7"/><rect x="65.2" y="357.3" width="5.9" height="1.7"/><rect x="72.2" y="357.3" width="5.6" height="1.7"/><rect x="58.6" y="359.8" width="5.4" height="1.4"/><rect x="65.2" y="359.8" width="5.9" height="1.4"/><rect x="72.2" y="359.8" width="5.6" height="1.4"/></g>
<circle cx="929" cy="895.7" r="9.6" fill="#42526e"/><path d="M924.8,896 L927.8,898.8 L933.4,893" fill="none" stroke="#fff" stroke-width="2.2" stroke-linecap="round" stroke-linejoin="round"/>
<rect x="1455.6" y="887.4" width="13.8" height="13.6" rx="2.4" fill="#e8e8e8" stroke="#8d8d8d" stroke-width="0.9"/><path d="M1458.5,894.2 L1461.5,897.8 L1466.8,890" fill="none" stroke="#333" stroke-width="2.4" stroke-linejoin="round"/>
<circle cx="1874.8" cy="894" r="1.9" fill="#42526e"/>
<circle cx="1881.8" cy="894" r="1.9" fill="#42526e"/>
<circle cx="1888.8" cy="894" r="1.9" fill="#42526e"/></svg>
<div class="a" style="left:1029px;top:97px;width:141px;height:103px;border:5px solid #ff7f27"></div>
</body></html>
